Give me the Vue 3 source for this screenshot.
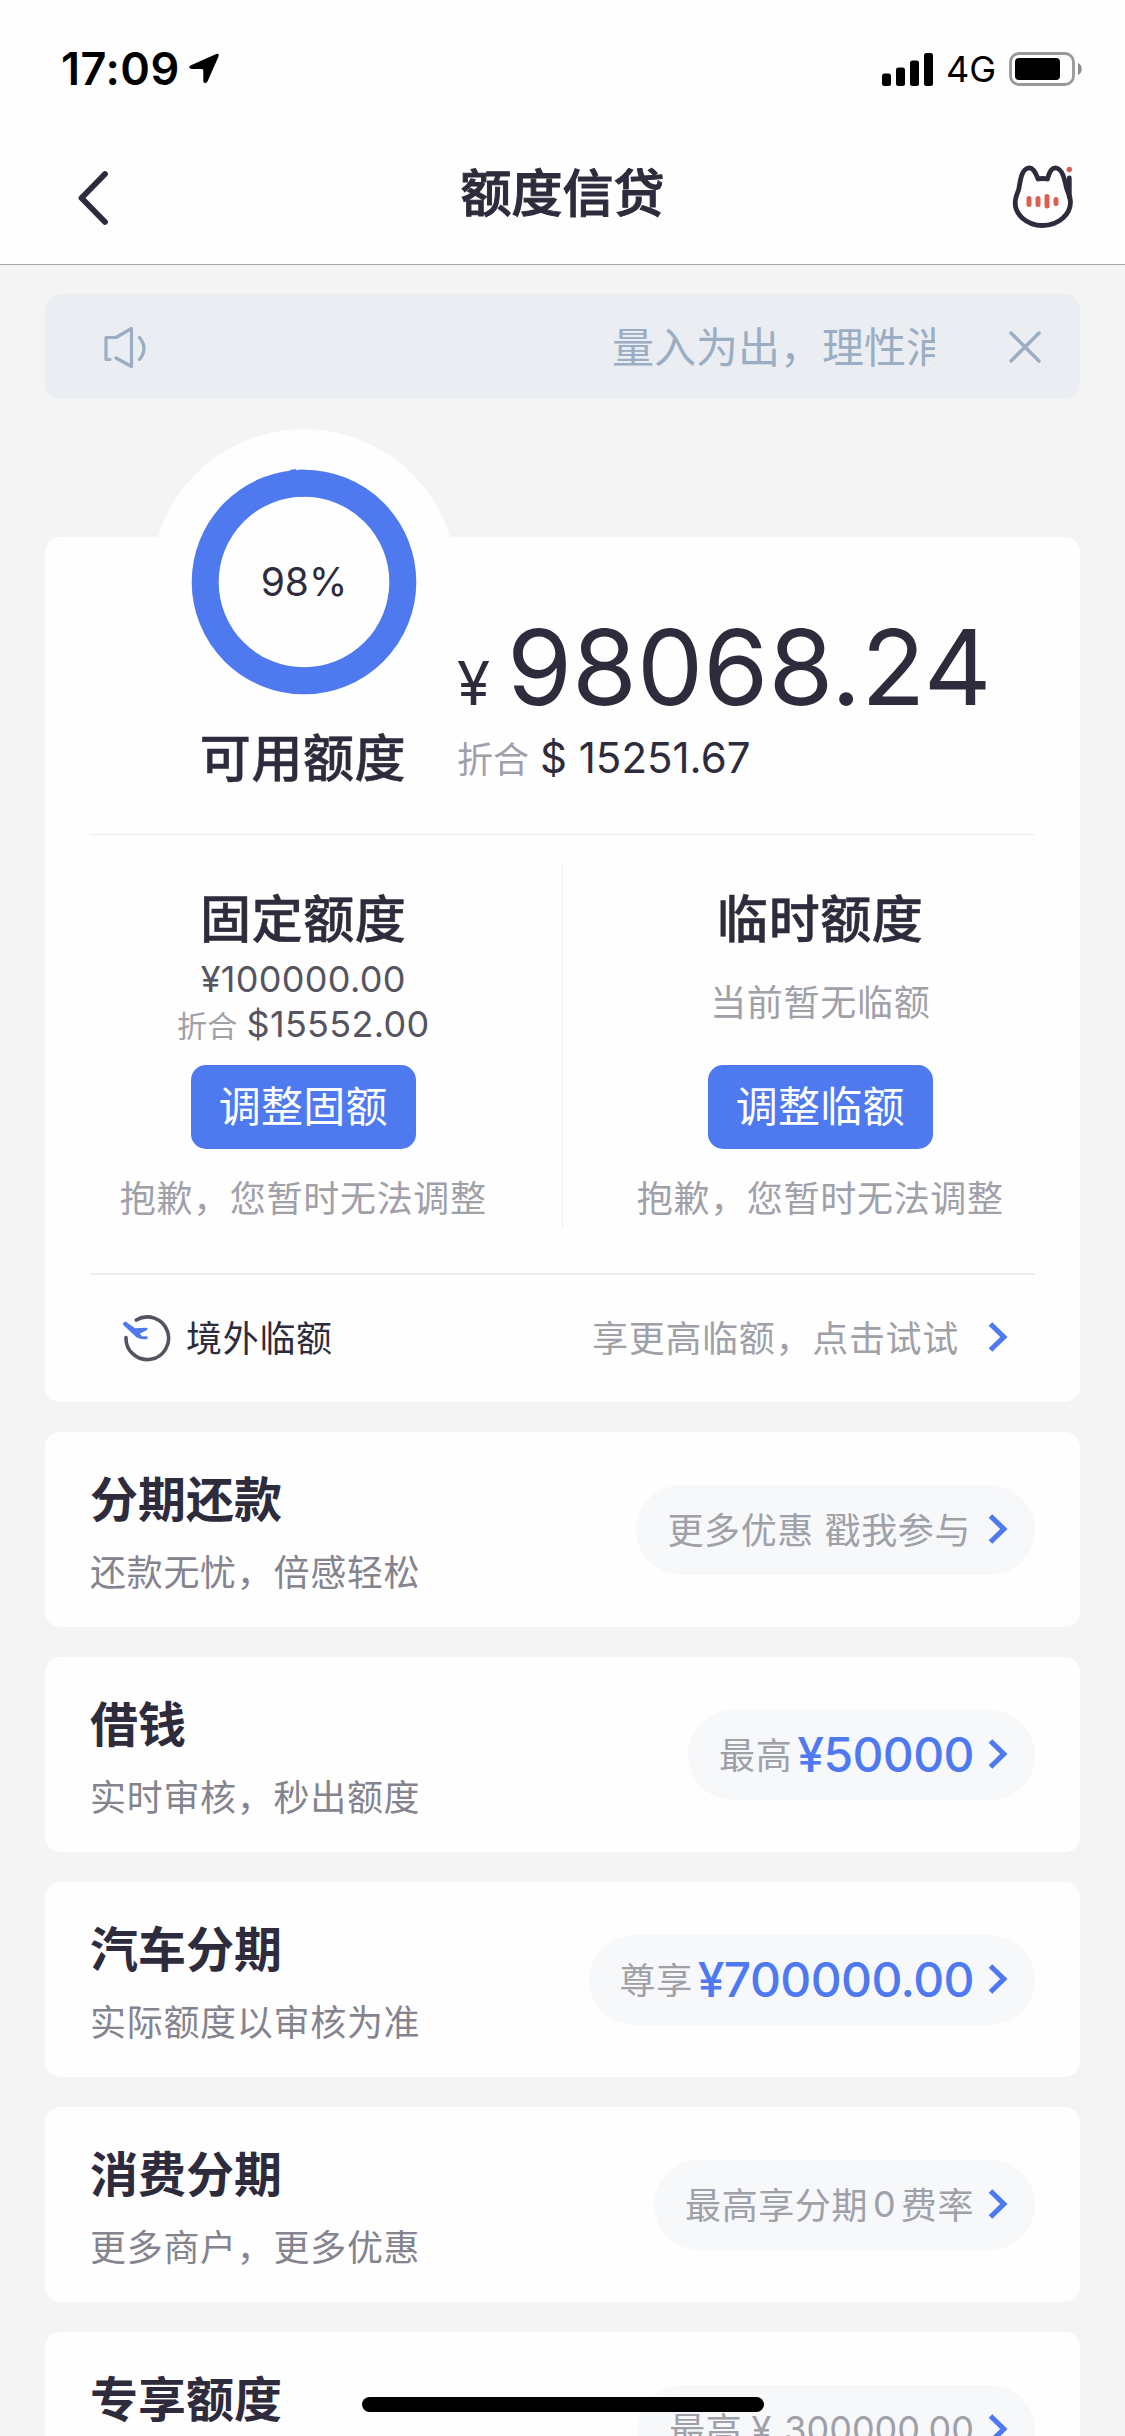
<script setup>
const quotas = [
  {
    title: '固定额度',
    amount: '¥100000.00',
    converted: '$15552.00',
    action: '调整固额',
    note: '抱歉，您暂时无法调整',
  },
  {
    title: '临时额度',
    empty: '当前暂无临额',
    action: '调整临额',
    note: '抱歉，您暂时无法调整',
  },
]

const products = [
  { title: '分期还款', desc: '还款无忧，倍感轻松', parts: [{ text: '更多优惠 戳我参与', kind: 'plain wide' }] },
  { title: '借钱', desc: '实时审核，秒出额度', parts: [{ text: '最高', kind: 'plain' }, { text: '¥50000', kind: 'money' }] },
  { title: '汽车分期', desc: '实际额度以审核为准', parts: [{ text: '尊享', kind: 'plain' }, { text: '¥700000.00', kind: 'money' }] },
  {
    title: '消费分期',
    desc: '更多商户，更多优惠',
    parts: [{ text: '最高享分期', kind: 'plain' }, { text: '0', kind: 'zero' }, { text: '费率', kind: 'plain' }],
  },
  {
    title: '专享额度',
    parts: [{ text: '最高', kind: 'plain' }, { text: '¥', kind: 'yen' }, { text: '300000.00', kind: 'figure' }],
  },
]
</script>

<template>
  <div class="screen">
    <header class="top">
      <div class="status">
        <span class="time">17:09</span>
        <svg class="locate" width="32" height="32" viewBox="0 0 32 32">
          <path d="M3 13.2 28.2 2 Q31.5 1 30.5 4.5 L19.5 29.5 Q16 33 15.3 29 V18.6 Q15.3 17 13.8 17 H3.5 Q-1 15.500 3 13.2Z" />
        </svg>
        <svg class="signal" width="52" height="33" viewBox="0 0 52 33">
          <rect x="0" y="20.500" width="9" height="12.500" rx="2.500" />
          <rect x="14" y="14.500" width="9" height="18.500" rx="2.500" />
          <rect x="28" y="7.500" width="9" height="25.500" rx="2.500" />
          <rect x="42" y="0" width="9" height="33" rx="2.500" />
        </svg>
        <span class="network">4G</span>
        <svg class="battery" width="74" height="34" viewBox="0 0 74 34">
          <rect x="1.500" y="1.500" width="63" height="31" rx="8.500" fill="none" stroke="#999" stroke-width="2.800" />
          <rect x="6" y="6" width="45" height="22" rx="4" />
          <path d="M69 11 C74 13 74 21 69 23Z" fill="#8d8d8d" />
        </svg>
      </div>
      <nav class="navbar">
        <svg class="back" width="36" height="60" viewBox="0 0 36 60">
          <path d="M30 6 6.500 30 30 54" fill="none" stroke="#2e2c3c" stroke-width="5.800" stroke-linecap="round" stroke-linejoin="round" />
        </svg>
        <h1>额度信贷</h1>
        <svg class="cat" width="66" height="66" viewBox="0 0 66 66">
          <g fill="none" stroke="#2e2c3c" stroke-width="4.800" stroke-linecap="round" stroke-linejoin="round">
            <path d="M27 16 C24 8 21.500 4.500 17.500 5 C11 6 9.500 16 8 25 C7.500 29 4.500 32 4.200 39 C3.800 51 15 62.500 31.500 62.500 C48 62.500 59.500 51 59.500 39 C59.300 32 56.500 29 55.500 25 C53.500 16 51.500 6 45 5 C41 4.500 38.500 8 36.500 16 Q31.500 15 27 16Z" />
            <path d="M58.300 15 V34" />
          </g>
          <g fill="#dc5f52">
            <circle cx="58.300" cy="6.500" r="2.700" />
            <rect x="15.500" y="33" width="5" height="11" rx="2.500" />
            <rect x="24.500" y="33" width="5" height="11" rx="2.500" />
            <rect x="33.500" y="31" width="5" height="14.500" rx="2.500" />
            <rect x="42.500" y="34" width="5" height="9" rx="2.500" />
          </g>
        </svg>
      </nav>
    </header>

    <main class="content">
      <section class="notice">
        <svg width="46" height="44" viewBox="0 0 46 44">
          <path
            d="M7 34.500H3V12.500H13L28.500 3.500V41.500L13 33M36.500 12.500Q45.500 23.500 36.500 34.500"
            fill="none" stroke="#9badc2" stroke-width="3.200" stroke-linecap="round" stroke-linejoin="round"
          />
        </svg>
        <div class="marquee"><span>量入为出，理性消费</span></div>
        <svg class="close" width="34" height="34" viewBox="0 0 34 34">
          <path d="M3 3 31 31M31 3 3 31" fill="none" stroke="#9badc2" stroke-width="3.400" stroke-linecap="round" />
        </svg>
      </section>

      <section class="quota-card">
        <div class="halo"></div>
        <div class="summary">
          <div class="gauge">
            <div class="ring">
              <svg width="226" height="226" viewBox="0 0 226 226" fill="none" stroke="#4f7aef" stroke-width="27">
                <circle cx="113" cy="113" r="98.800" />
                <path d="M107 14.200H114" />
                <path d="M100.500 14.300 106.500 13.500" />
              </svg>
              <span>98%</span>
            </div>
            <h2>可用额度</h2>
          </div>
          <div class="available">
            <p class="total"><small>¥</small><strong>98068.24</strong></p>
            <p class="usd"><span>折合</span><b>$ 15251.67</b></p>
          </div>
        </div>

        <div class="quotas">
          <div v-for="q in quotas" :key="q.title" class="quota">
            <h2>{{ q.title }}</h2>
            <div v-if="q.amount" class="figures">
              <p>{{ q.amount }}</p>
              <p><small>折合</small>{{ q.converted }}</p>
            </div>
            <div v-else class="figures none">{{ q.empty }}</div>
            <button type="button">{{ q.action }}</button>
            <p class="note">{{ q.note }}</p>
          </div>
        </div>

        <div class="overseas">
          <svg width="50" height="50" viewBox="0 0 50 50">
            <path d="M15.300 6 A21.300 21.300 0 1 1 5 23.500" fill="none" stroke="#54535f" stroke-width="3.600" stroke-linecap="round" />
            <path d="M2.200 11 Q1.500 7.500 5 7.800 L14 14.300 24.500 13.700 Q28.500 14 25.500 16.300 L18.800 19.700 21.500 22.400 25.300 22.200 Q28 23 26 25 Q20 26 15.800 23.500Z" fill="#4f7aef" />
          </svg>
          <span class="label">境外临额</span>
          <span class="hint">享更高临额，点击试试</span>
          <svg class="chevron" width="20" height="32" viewBox="0 0 20 32">
            <path d="M2.500 3 15.800 16 2.500 29" fill="none" stroke="#4f7aef" stroke-width="5.200" />
          </svg>
        </div>
      </section>

      <section v-for="p in products" :key="p.title" class="product">
        <div class="info">
          <h3>{{ p.title }}</h3>
          <p>{{ p.desc }}</p>
        </div>
        <div class="pill">
          <span v-for="part in p.parts" :key="part.text" :class="part.kind">{{ part.text }}</span>
          <svg class="chevron" width="20" height="32" viewBox="0 0 20 32">
            <path d="M2.500 3 15.800 16 2.500 29" fill="none" stroke="#4f7aef" stroke-width="5.200" />
          </svg>
        </div>
      </section>
    </main>
    <div class="home-bar"></div>
  </div>
</template>

<style>
body {
  margin: 0;
  overflow: hidden;
}
</style>

<style scoped>
.screen {
  position: relative;
  width: 1125px;
  height: 2436px;
  overflow: hidden;
  background: #f4f4f4;
  color: #2e2c3c;
  font-family: Inter, "Noto Sans CJK SC", sans-serif;
  white-space: nowrap;
}
h1, h2, h3, p {
  margin: 0;
}
svg {
  display: block;
  flex: none;
}
.top {
  height: 264px;
  border-bottom: 1px solid #a9a9a9;
  background: #fefefe;
}
.status {
  display: flex;
  align-items: center;
  box-sizing: border-box;
  height: 132px;
  padding: 6px 42px 0 61px;
}
.time {
  width: 127px;
  font-size: 45px;
  font-weight: 600;
  line-height: 54px;
  letter-spacing: 0.5px;
  color: #000;
}
.locate {
  margin-bottom: 2px;
}
.signal {
  margin-left: auto;
}
.network {
  width: 63px;
  margin-left: 12px;
  font-size: 36px;
  color: #000;
}
.navbar {
  display: grid;
  grid-template-columns: 1fr auto 1fr;
  align-items: center;
  height: 132px;
  padding: 0 48px 0 75px;
}
.navbar h1 {
  margin: -9px 0 0 -27px;
  font-size: 51px;
  font-weight: 500;
  line-height: 60px;
  -webkit-text-stroke: 1px currentColor;
}
.cat {
  justify-self: end;
  margin-bottom: 4px;
}
.content {
  display: flex;
  flex-direction: column;
  padding: 29px 45px 0;
}
.notice {
  display: flex;
  align-items: center;
  box-sizing: border-box;
  height: 105px;
  padding: 0 38px 0 58px;
  border-radius: 15px;
  background: #eaeef3;
}
.marquee {
  flex: 1;
  overflow: hidden;
  margin-right: 73px;
  padding: 2px 0 0 463px;
  font-size: 42px;
  line-height: 60px;
  color: #9badc2;
}
.quota-card {
  position: relative;
  box-sizing: border-box;
  height: 865px;
  margin: 138px 0 30px;
  padding: 0 45px;
  border-radius: 15px;
  background: #fefefe;
}
.halo {
  position: absolute;
  top: -108px;
  left: 106px;
  width: 306px;
  height: 306px;
  border-radius: 50%;
  background: #fefefe;
}
.summary {
  position: relative;
  display: flex;
  height: 297px;
  border-bottom: 1px solid #ededed;
}
h2 {
  font-size: 51px;
  font-weight: 500;
  line-height: 60px;
  letter-spacing: 0.6px;
  -webkit-text-stroke: 0.5px currentColor;
}
.gauge {
  display: flex;
  flex-direction: column;
  align-items: center;
  box-sizing: border-box;
  width: 367px;
  margin-top: -68px;
  padding-left: 61px;
}
.gauge h2 {
  margin-top: 34px;
  padding-right: 2px;
}
.ring {
  display: grid;
  place-items: center;
}
.ring > * {
  grid-area: 1 / 1;
}
.ring span {
  padding-bottom: 2px;
  font-size: 39px;
}
.available {
  padding-top: 78px;
}
.total {
  display: flex;
  align-items: baseline;
  height: 114px;
  line-height: 104px;
}
.total small {
  width: 50px;
  font-size: 60px;
}
.total strong {
  font-size: 105px;
  font-weight: 400;
}
.usd {
  display: flex;
  align-items: center;
  height: 56px;
}
.usd span {
  width: 83px;
  font-size: 36px;
  color: #a0a0a8;
}
.usd b {
  font-size: 42px;
  font-weight: 400;
}
.quotas {
  display: grid;
  grid-template-columns: 1fr 1fr;
  height: 438px;
  margin: 0 -45px;
}
.quota {
  display: flex;
  flex-direction: column;
  align-items: center;
  box-sizing: border-box;
  height: 364px;
  margin-top: 29px;
  padding: 26px 2px 0 0;
}
.quota:first-child {
  padding-right: 0;
  border-right: 1px solid #eee;
}
.figures {
  display: flex;
  flex-direction: column;
  align-items: center;
  height: 90px;
  margin: 7px 0 18px;
  font-size: 36px;
  line-height: 45px;
  letter-spacing: 0.3px;
  color: #555460;
}
.figures small {
  margin-right: 9px;
  font-size: 30px;
  color: #a0a0a8;
}
.figures.none {
  box-sizing: border-box;
  justify-content: center;
  padding-top: 3px;
  letter-spacing: 0.7px;
  color: #a0a0a8;
}
.quota button {
  width: 225px;
  height: 84px;
  padding: 0;
  border: 0;
  border-radius: 15px;
  background: #4f7aef;
  color: #fff;
  font-family: inherit;
  font-size: 42px;
  line-height: 82px;
  letter-spacing: 0.2px;
}
.note {
  margin-top: 23px;
  font-size: 36px;
  line-height: 54px;
  letter-spacing: 0.7px;
  color: #a0a0a8;
}
.overseas {
  display: flex;
  align-items: center;
  height: 127px;
  padding: 0 27px 0 31px;
  border-top: 2px solid #eee;
  font-size: 36px;
  letter-spacing: 0.7px;
}
.overseas .label {
  margin-left: 15px;
  padding-bottom: 5px;
}
.hint {
  margin-left: auto;
  margin-right: 29px;
  padding-bottom: 5px;
  color: #a0a0a8;
}
.overseas .chevron {
  margin-bottom: 3px;
}
.product {
  display: flex;
  justify-content: space-between;
  box-sizing: border-box;
  height: 195px;
  margin-bottom: 30px;
  padding: 0 45px;
  border-radius: 15px;
  background: #fefefe;
}
.info {
  padding-top: 35px;
}
.info h3 {
  font-size: 48px;
  font-weight: 700;
  line-height: 66px;
}
.info p {
  margin-top: 13px;
  font-size: 36px;
  line-height: 54px;
  letter-spacing: 0.7px;
  color: #84838e;
}
.pill {
  display: flex;
  align-items: center;
  box-sizing: border-box;
  height: 90px;
  margin-top: 53px;
  padding: 0 27px 3px 31px;
  border-radius: 45px;
  background: #f7f8fa;
  color: #a0a0a8;
  font-size: 36px;
}
.pill .chevron {
  margin-left: 14px;
}
.plain {
  padding-bottom: 2px;
  letter-spacing: 0.6px;
}
.wide {
  margin-right: 3px;
}
.money {
  margin-left: 5px;
  padding-top: 2px;
  font-size: 48px;
  font-weight: 500;
  letter-spacing: -0.6px;
  color: #4f7aef;
}
.zero {
  margin: 0 5px;
}
.yen {
  margin: 0 13px 0 9px;
}
.home-bar {
  position: absolute;
  bottom: 24px;
  left: 362px;
  width: 402px;
  height: 15px;
  border-radius: 8px;
  background: #000;
}
</style>
